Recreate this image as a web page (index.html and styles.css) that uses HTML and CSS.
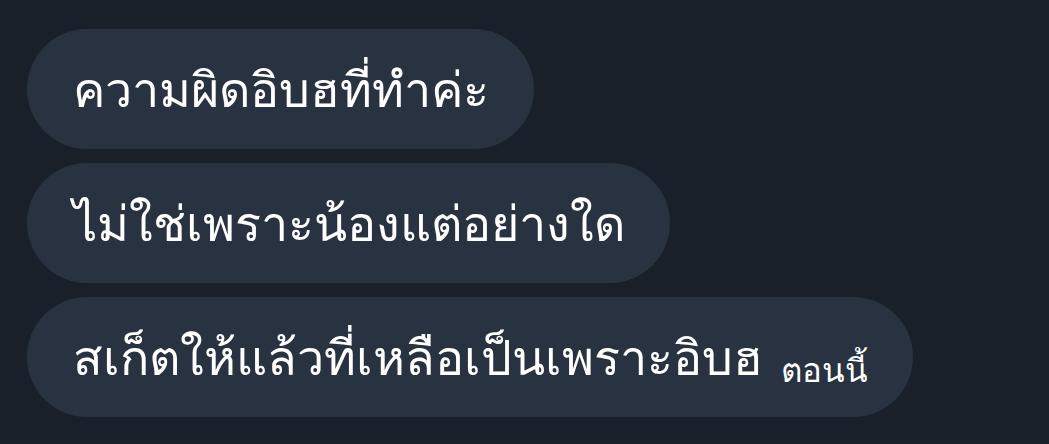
FILE: index.html
```html
<!DOCTYPE html>
<html lang="th">
<head>
<meta charset="utf-8">
<meta name="viewport" content="width=device-width, initial-scale=1">
<title>ข้อความ</title>
<link rel="stylesheet" href="styles.css">
</head>
<body>
  <div class="chat">
    <div class="bubble">ความผิดอิบฮที่ทำค่ะ</div>
    <div class="bubble">ไม่ใช่เพราะน้องแต่อย่างใด</div>
    <div class="bubble">สเก็ตให้แล้วที่เหลือเป็นเพราะอิบฮ <span class="time">ตอนนี้</span></div>
  </div>
</body>
</html>
```
FILE: styles.css
```css
body {
    margin: 0;
    background-color: #19202a;
    color: #ffffff;
    font-family: "Noto Sans", sans-serif;
}

.chat {
    display: flex;
    flex-direction: column;
    align-items: flex-start;
    gap: 14px;
    padding: 29px 0 0 27px;
}

.bubble {
    display: flex;
    align-items: center;
    height: 120px;
    padding: 0 45px 0 46px;
    box-sizing: border-box;
    border-radius: 60px;
    background-color: #283240;
    font-size: 48.5px;
    white-space: pre;
}

/* small "now" label after the last message */
.bubble .time {
    font-size: 33px;
    margin-left: 5px;
    padding-top: 27px;
}
```
